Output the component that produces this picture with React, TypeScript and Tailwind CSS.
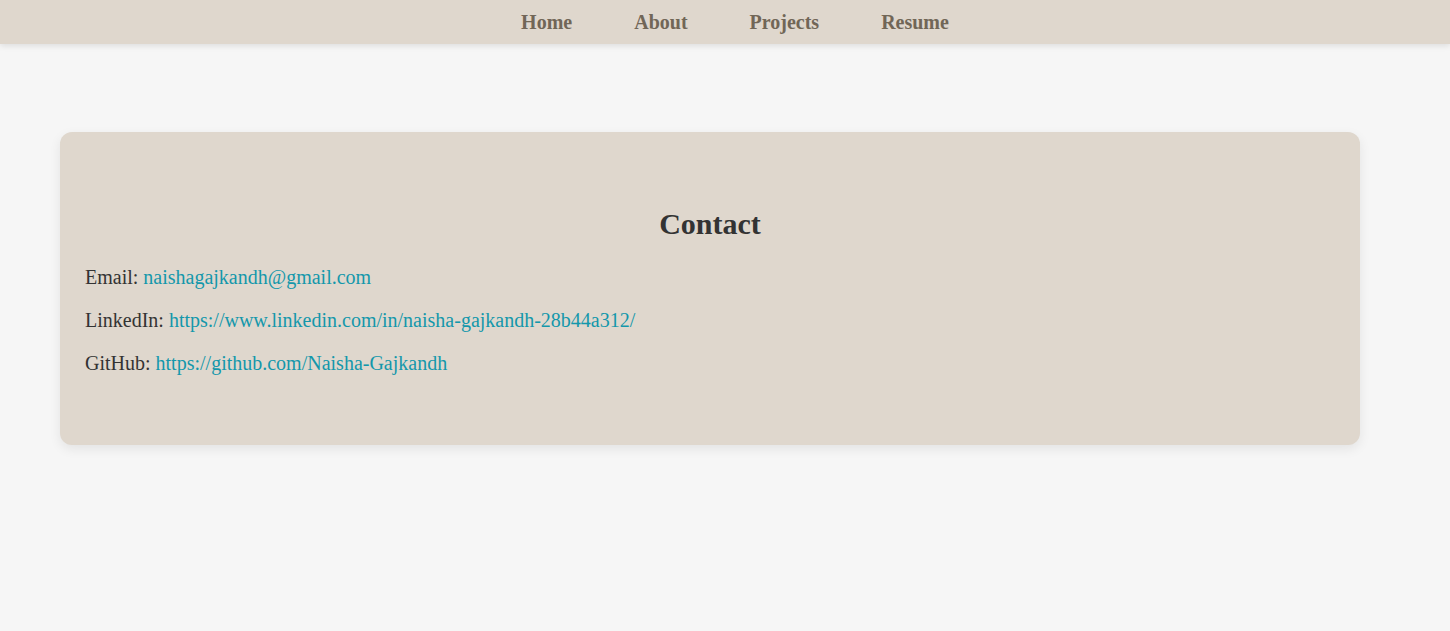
import React from "react";

export default function App() {
  const serif = { fontFamily: '"Liberation Serif", "Times New Roman", serif' };
  return (
    <div className="min-h-[631px] bg-[#f6f6f6] text-[#333]" style={serif}>
      <nav className="h-[44px] bg-[#dfd7cd] shadow-[0_2px_6px_rgba(0,0,0,0.1)] flex items-center justify-center pl-[20px] gap-[62px] text-[20px] font-bold text-[#716657]">
        <a>Home</a>
        <a>About</a>
        <a>Projects</a>
        <a>Resume</a>
      </nav>
      <div className="pl-[60px] pt-[88px]">
        <section className="w-[1300px] bg-[#dfd7cd] rounded-[12px] shadow-[0_4px_12px_rgba(0,0,0,0.08)] px-[25px] pt-[75px] pb-[70px] text-[20px]">
          <h2 className="text-[30px] font-bold text-center leading-[34px] mb-[25px]">Contact</h2>
          <p className="leading-[23px]">
            Email: <a className="text-[#1497ab]">naishagajkandh@gmail.com</a>
          </p>
          <p className="leading-[23px] mt-[20px]">
            LinkedIn: <a className="text-[#1497ab]">https://www.linkedin.com/in/naisha-gajkandh-28b44a312/</a>
          </p>
          <p className="leading-[23px] mt-[20px]">
            GitHub: <a className="text-[#1497ab]">https://github.com/Naisha-Gajkandh</a>
          </p>
        </section>
      </div>
    </div>
  );
}
